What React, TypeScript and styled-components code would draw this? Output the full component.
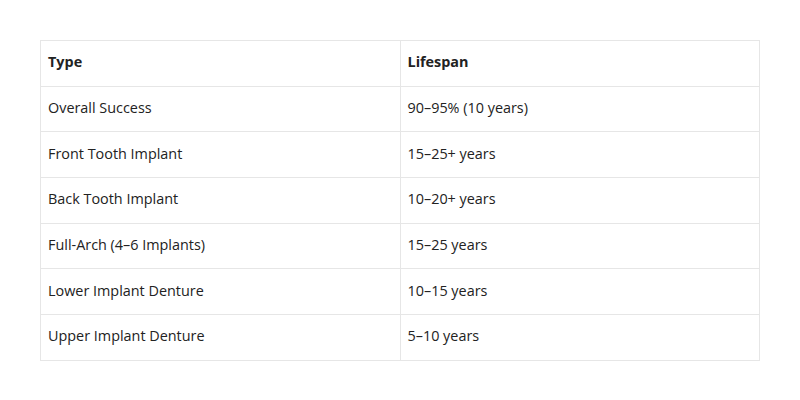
import React from 'react';
import styled, { createGlobalStyle } from 'styled-components';

const GlobalStyle = createGlobalStyle`
  body {
    margin: 0;
    background: #ffffff;
    font-family: 'Open Sans', 'Liberation Sans', sans-serif;
  }
`;

const Page = styled.div`
  width: 800px;
  height: 400px;
  padding: 40px;
  box-sizing: border-box;
`;

const Table = styled.table`
  width: 720px;
  height: 320px;
  border-collapse: collapse;
  table-layout: fixed;
  font-size: 14.4px;
  color: #222222;
`;

const Row = styled.tr`
  height: 45.7px;
`;

const HeaderCell = styled.th`
  border: 1px solid #e6e6e6;
  padding: 0 7px 3px;
  text-align: left;
  font-weight: 700;
  vertical-align: middle;
`;

const Cell = styled.td`
  border: 1px solid #e6e6e6;
  padding: 0 7px 3px;
  text-align: left;
  vertical-align: middle;
`;

const rows: [string, string][] = [
  ['Overall Success', '90–95% (10 years)'],
  ['Front Tooth Implant', '15–25+ years'],
  ['Back Tooth Implant', '10–20+ years'],
  ['Full-Arch (4–6 Implants)', '15–25 years'],
  ['Lower Implant Denture', '10–15 years'],
  ['Upper Implant Denture', '5–10 years'],
];

export default function App() {
  return (
    <Page>
      <GlobalStyle />
      <Table>
        <thead>
          <Row>
            <HeaderCell>Type</HeaderCell>
            <HeaderCell>Lifespan</HeaderCell>
          </Row>
        </thead>
        <tbody>
          {rows.map(([type, life]) => (
            <Row key={type}>
              <Cell>{type}</Cell>
              <Cell>{life}</Cell>
            </Row>
          ))}
        </tbody>
      </Table>
    </Page>
  );
}
